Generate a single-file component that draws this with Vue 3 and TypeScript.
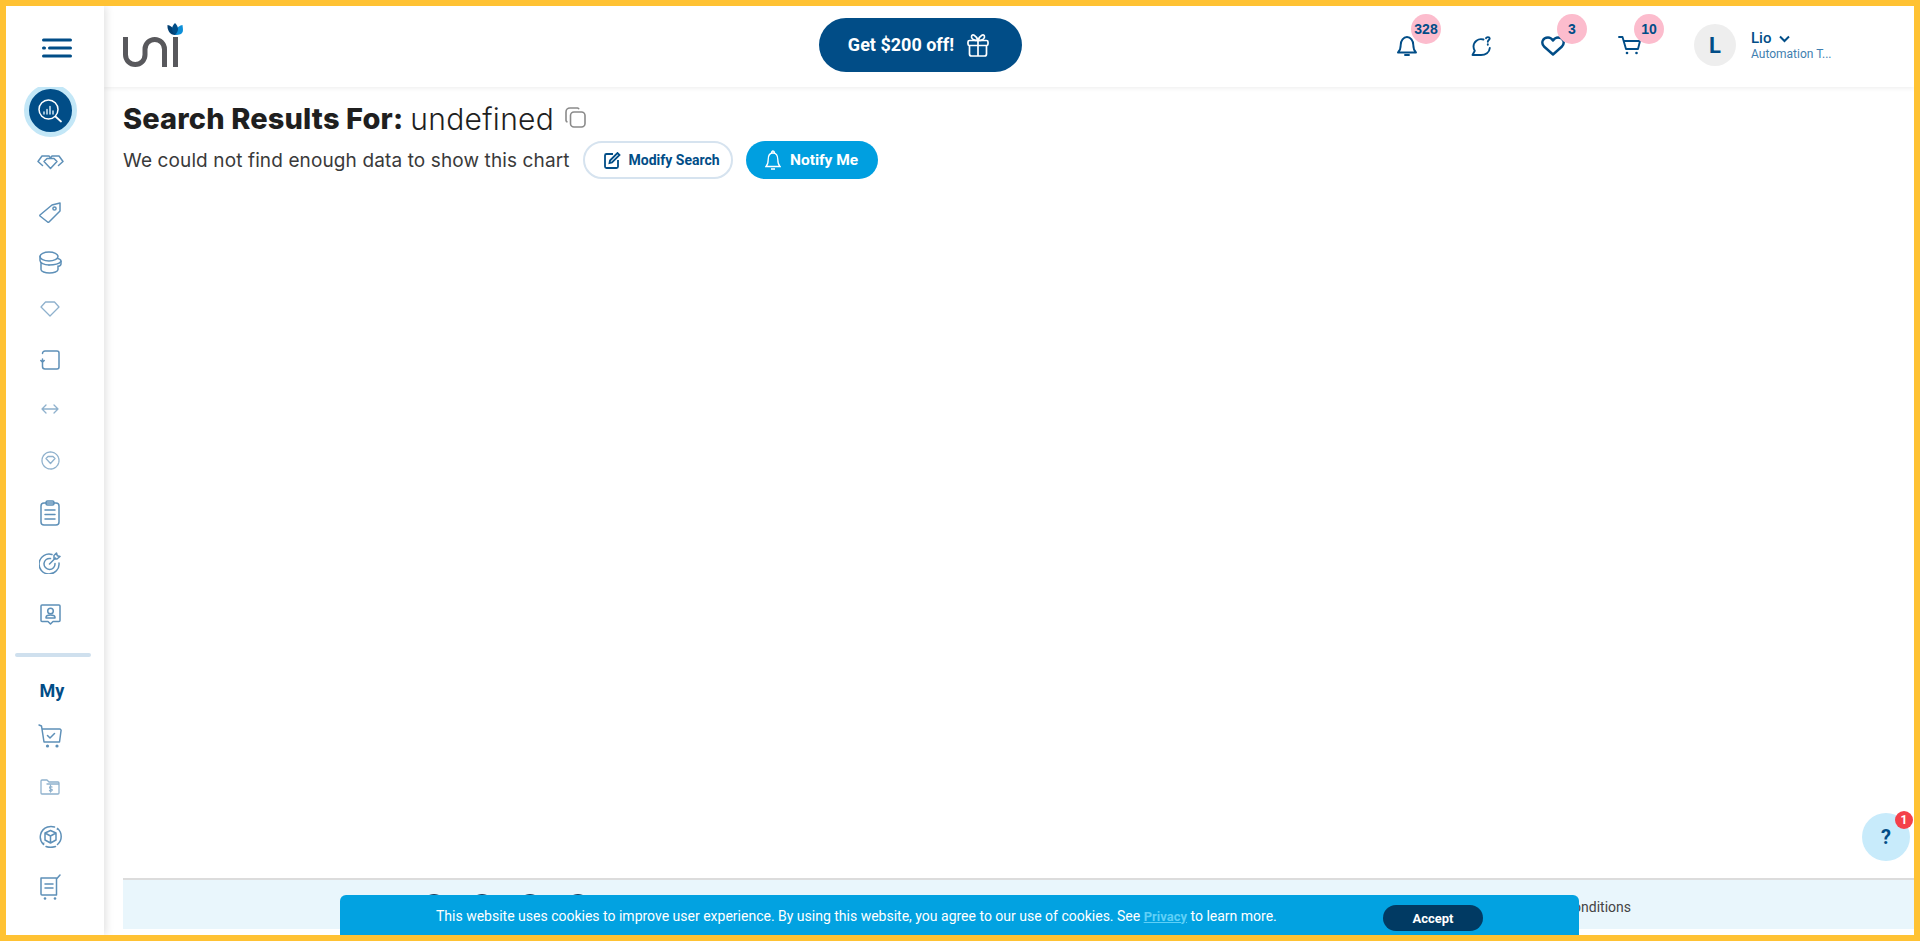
<script setup lang="ts">
const socials: number[] = [1, 2, 3, 4]
const counts = { alerts: 328, likes: 3, cart: 10 }
</script>

<template>
  <div class="frame">
    <aside class="side">
      <button class="burger" aria-label="Menu">
        <svg width="30" height="20" viewBox="0 0 30 20"><path d="M1.500 2h27M1.500 10h1M7.500 10h21M1.500 18h27" stroke="#014d87" stroke-width="3" stroke-linecap="round" fill="none"/></svg>
      </button>
      <div class="active-clip">
        <div class="active">
          <svg width="24" height="24" viewBox="0 0 24 24" fill="none" stroke="#fff"><circle cx="10.500" cy="10.500" r="9.500" stroke-width="1.500"/><path d="M17.500 17.500l5.500 5" stroke-width="1.700" stroke-linecap="round"/><path d="M6 15v-2M9 15v-4.500M12 15V7.500M15 15v-3" stroke="#cfe6f5" stroke-width="1.500" stroke-linecap="round"/></svg>
        </div>
      </div>
      <div class="item i1"><svg width="27" height="15" viewBox="0 0 27 15" class="ic"><path d="M5.500 10.500 1 6.500 5 1h7l1.500 2L15 1h7l4 5.500-4.500 4"/><path d="M7 6.500 10 3.500h7l3 3-6.500 7z"/></svg></div>
      <div class="item i2"><svg width="22" height="21" viewBox="0 0 22 21" class="ic"><path d="M1 13 13 3l8-2v8L10 20a1 1 0 0 1-1.400 0L1 14a.700.700 0 0 1 0-1z"/><circle cx="15.500" cy="6.500" r="1.600"/></svg></div>
      <div class="item i3"><svg width="23" height="23" viewBox="0 0 23 23" class="ic"><ellipse cx="10" cy="5.500" rx="9" ry="4.500"/><path d="M1 5.500v4C1 12 5 14 10 14M19 7.500c1.500.5 3 1.500 3 2.500v3c0 1-1 2-3 2.500M19 15v3.500c0 2-4 3.500-8.500 3.500S2 20.500 2 18.500V12"/><path d="M10 14c4 0 9 0 12-3.500"/></svg></div>
      <div class="item i4"><svg width="20" height="16" viewBox="0 0 20 16" class="ic faint"><path d="M1 6 5.500 1h9L19 6 10 15z"/></svg></div>
      <div class="item i5"><svg width="20" height="20" viewBox="0 0 20 20" class="ic"><path d="M2.500 3.500A2.500 2.500 0 0 1 5 1h12a2 2 0 0 1 2 2v14a2 2 0 0 1-2 2H5a2.500 2.500 0 0 1-2.500-2.500V9M.800 10.500l1.700 1.800 1.700-1.800"/></svg></div>
      <div class="item i6"><svg width="18" height="10" viewBox="0 0 18 10" class="ic faint"><path d="M1 5h16M5 1 1 5l4 4M13 1l4 4-4 4"/></svg></div>
      <div class="item i7"><svg width="19" height="19" viewBox="0 0 19 19" class="ic faint"><circle cx="9.500" cy="9.500" r="8.500" stroke-dasharray="2 .8"/><path d="M5 7.500 7 5.500h5l2 2-4.500 5z"/></svg></div>
      <div class="item i8"><svg width="20" height="26" viewBox="0 0 20 26" class="ic"><rect x="1" y="3" width="18" height="22" rx="3"/><rect x="6" y="1" width="8" height="4" rx="1.500"/><path d="M5 10h10M5 14.500h10M5 19h10"/></svg></div>
      <div class="item i9"><svg width="22" height="22" viewBox="0 0 22 22" class="ic"><path d="M13 2.500A10 10 0 1 0 20 11M11.500 6.500a5.500 5.500 0 1 0 4.500 5"/><path d="M10.500 12l6-6M15 7V3.500L17.500 1l.8 2.700 2.700.8-3 2.500z"/></svg></div>
      <div class="item i10"><svg width="21" height="21" viewBox="0 0 21 21" class="ic"><path d="M2 1h17a1 1 0 0 1 1 1v14.500a1 1 0 0 1-1 1h-6l-2.500 2.500L8 17.500H2a1 1 0 0 1-1-1V2a1 1 0 0 1 1-1z"/><circle cx="10.500" cy="7" r="2.800"/><path d="M6 14v-.5c0-1.500 2-2.500 4.500-2.500s4.500 1 4.500 2.500v.5z"/></svg></div>
      <div class="rule"></div>
      <div class="my">My</div>
      <div class="item m1"><svg width="24" height="24" viewBox="0 0 24 24" class="ic"><path d="M1 1l2.500 1 2.500 16h15.500L23 7a1.500 1.500 0 0 0-1.500-2H4M9.500 11.500l2.500 2.500 4.500-4.500"/><circle cx="9.500" cy="22" r="1.600" class="dot"/><circle cx="19" cy="22" r="1.600" class="dot"/></svg></div>
      <div class="item m2"><svg width="20" height="16" viewBox="0 0 20 16" class="ic faint"><path d="M1 14V2a1 1 0 0 1 1-1h5l2 2h9a1 1 0 0 1 1 1v10a1 1 0 0 1-1 1H2a1 1 0 0 1-1-1zM7 5h12M12 8c-2-1-3 0-2 1.500s3 .5 2 2-2 .5-2.500 0M10.500 6.500v6.500"/></svg></div>
      <div class="item m3"><svg width="23" height="23" viewBox="0 0 23 23" class="ic"><path d="M18.500 3.500a10.500 10.500 0 0 1 0 16M4.500 19.500a10.500 10.500 0 0 1 4-17.500c2-.600 5-.600 7 0M7 21.500c3 1.200 6.500 1 9.500 0M11.500 5.500l5.500 2.500v7l-5.500 3-5.500-3V8zM6 8l5.500 3L17 8M11.500 11v7"/><path d="M18.500 2.500l1.500 2-2.500.5zM3 18l2.500-.5-.5 2.500z" class="dot"/></svg></div>
      <div class="item m4"><svg width="21" height="26" viewBox="0 0 21 26" class="ic"><path d="M1 4h15.500v17H2a1 1 0 0 1-1-1zM16.500 5l3.500-4M5 10h8M5 14h8"/><circle cx="5" cy="24.500" r="1.300" class="dot"/><circle cx="15" cy="24.500" r="1.300" class="dot"/></svg></div>
    </aside>

    <div class="main">
      <header class="top">
        <div class="logo">
          <svg width="65" height="50" viewBox="0 0 65 50" fill="none">
            <path d="M5.500 17v17.750a9.750 9.750 0 0 0 19.500 0V29.250a9.750 9.750 0 0 1 19.500 0V47M55.500 17v30" stroke="#58585c" stroke-width="5"/>
            <path d="M55 15C50 15 47 10 47.500 5 50 5.500 53 7 55 11z" fill="#013f73"/>
            <path d="M55 15C65 15 63 10 62.500 5 60 5.500 57 7 55 11z" fill="#0d8fd8"/>
            <path d="M55 15C51 11 51 7 55 3 59 7 59 11 55 15z" fill="#014d87"/>
          </svg>
        </div>
        <button class="promo">
          <span>Get $200 off!</span>
          <svg width="22" height="24" viewBox="0 0 22 24" fill="none" stroke="#fff" stroke-width="1.700" stroke-linejoin="round"><rect x="1" y="7.500" width="20" height="5" rx="1.500"/><path d="M2.500 12.500V21a2 2 0 0 0 2 2h13a2 2 0 0 0 2-2v-8.500M11 7.500V23M11 7.500C9 2 5 .5 4.500 3.500 4 6 7 7.500 11 7.500zM11 7.500c2-5.500 6-7 6.500-4 .5 2.500-2.500 4-6.500 4z"/></svg>
        </button>
        <div class="tools">
          <div class="tool t1">
            <svg width="20" height="20" viewBox="0 0 20 20" class="tic"><path d="M1 16.500h18c-1.500-1.500-2.700-3-2.700-7.500 0-4.500-2.800-8-6.300-8S3.700 4.500 3.700 9c0 4.500-1.200 6-2.700 7.500zM8 19h4"/></svg>
            <span class="badge b1">{{ counts.alerts }}</span>
          </div>
          <div class="tool t2">
            <svg width="20" height="20" viewBox="0 0 20 20" class="tic"><path d="M12.500 3.500C7 1.800 2.500 6 2.500 10.500c0 1.600.5 3 1.300 4.200L1.500 19H10c4.500 0 8.500-2.500 8.800-7"/><path d="M15 2.200c.6-1.500 3.500-1.500 3.700.2.100 1.500-1.900 1.600-1.900 3.300M16.800 8.200v.6"/></svg>
          </div>
          <div class="tool t3">
            <svg width="24" height="20" viewBox="0 0 24 20" class="tic big"><path d="M12 18.500 3 10.500C-.5 6.500 2 1.500 7 1.500c2.500 0 4 1.500 5 3 1-1.500 2.500-3 5-3 5 0 7.500 5 4 9z"/></svg>
            <span class="badge b3">{{ counts.likes }}</span>
          </div>
          <div class="tool t4">
            <svg width="24" height="19" viewBox="0 0 24 19" class="tic"><path d="M1 1h3.500l3.500 12h12l2-8H6"/><circle cx="9" cy="17" r="1.300" fill="#014d87" stroke="none"/><circle cx="18.500" cy="17" r="1.300" fill="#014d87" stroke="none"/></svg>
            <span class="badge b3">{{ counts.cart }}</span>
          </div>
          <div class="profile">
            <div class="avatar">L</div>
            <div class="who">
              <div class="name">Lio <svg width="11" height="8" viewBox="0 0 11 8" fill="none" stroke="#014d87" stroke-width="2"><path d="M1 1.500l4.500 4.500L10 1.500"/></svg></div>
              <div class="role">Automation T...</div>
            </div>
          </div>
        </div>
      </header>

      <section class="content">
        <h1 class="title"><b>Search Results For:</b><span class="term">undefined</span>
          <svg class="copy" width="21" height="21" viewBox="0 0 21 21" fill="none" stroke="#8a8a8a" stroke-width="1.600"><path d="M14 2.200A2 2 0 0 0 12.500 1H5a4 4 0 0 0-4 4v8.500A2 2 0 0 0 2.500 15"/><rect x="5.500" y="5" width="14.500" height="15" rx="3.500"/></svg>
        </h1>
        <div class="row">
          <span class="msg">We could not find enough data to show this chart</span>
          <button class="btn ghost">
            <svg width="19" height="17" viewBox="0 0 19 17" fill="none" stroke="#014d87" stroke-width="1.800"><path d="M10 2H3.500A1.500 1.500 0 0 0 2 3.500v11A1.500 1.500 0 0 0 3.500 16h10a1.500 1.500 0 0 0 1.500-1.500V8"/><path d="M7 8.500 14.500 1l2 2L9 10.500l-2.500.5z"/></svg>
            Modify Search
          </button>
          <button class="btn solid">
            <svg width="16" height="20" viewBox="0 0 16 20" fill="none" stroke="#fff" stroke-width="1.300"><path d="M1 16.500h14c-1.500-1.500-2.200-3-2.200-7 0-4-1.800-6.500-4.800-6.500S3.200 5.500 3.200 9.500c0 4-.7 5.500-2.200 7zM6 19h4M6.500 3c0-1 .5-2 1.500-2s1.500 1 1.500 2"/></svg>
            Notify Me
          </button>
        </div>
      </section>

      <footer class="foot">
        <div class="socials"><span v-for="s in socials" :key="s" class="soc"></span></div>
        <span class="terms">Terms &amp; Conditions</span>
      </footer>
    </div>

    <div class="help">?<span class="help-badge">1</span></div>

    <div class="cookie">
      <span class="cookie-text">This website uses cookies to improve user experience. By using this website, you agree to our use of cookies. See <a class="privacy">Privacy</a> to learn more.</span>
      <button class="accept">Accept</button>
    </div>
  </div>
</template>

<style>
html, body { margin: 0; height: 100%; background: #fff; overflow: hidden; }
</style>

<style scoped>
.frame {
  box-sizing: border-box;
  width: 1920px;
  height: 941px;
  border: 6px solid #ffc233;
  display: flex;
  position: relative;
  overflow: hidden;
  background: #fff;
  font-family: Roboto, "Liberation Sans", sans-serif;
}
.side {
  width: 98px;
  flex: none;
  display: flex;
  flex-direction: column;
  align-items: center;
  box-shadow: 2px 0 8px rgba(0, 0, 0, .12);
  z-index: 2;
  background: #fff;
}
.burger { border: 0; background: none; padding: 0; margin: 32px 0 0 4px; height: 20px; line-height: 0; flex: none; }
.active-clip {
  margin: 29px 10px 0 0;
  width: 54px;
  height: 50px;
  overflow: hidden;
  display: flex;
  align-items: flex-end;
  justify-content: center;
  flex: none;
}
.active {
  width: 43px;
  height: 43px;
  border-radius: 50%;
  background: #014d87;
  border: 5px solid #c3e7f7;
  display: flex;
  align-items: center;
  justify-content: center;
  flex: none;
}
.item { height: 50px; display: flex; align-items: center; justify-content: center; flex: none; margin-right: 10px; }
.i2 { margin-top: 0; }
.i4 { margin-top: -3px; }
.i5 { margin-top: 1px; }
.i6 { margin-top: -1px; }
.i7 { margin-top: 1px; }
.i8 { margin-top: 3px; }
.i10 { margin-top: 1px; }
.m2 { margin-top: 1px; }
.m3 { margin-top: -1px; }
.m4 { margin-top: 1px; }
.ic { fill: none; stroke: #5e90b8; stroke-width: 1.500; stroke-linecap: round; stroke-linejoin: round; }
.ic.faint { stroke: #8fb1cd; stroke-width: 1.300; }
.ic .dot { fill: #5e90b8; stroke: none; }
.rule { width: 76px; height: 4px; border-radius: 2px; background: #cfe0ee; margin: 14px 4px 0 0; flex: none; }
.my { color: #014d87; font-weight: 700; font-size: 18px; line-height: 22px; margin: 23px 6px 9px 0; }

.main { flex: 1; display: flex; flex-direction: column; min-width: 0; }
.top {
  height: 81px;
  flex: none;
  box-sizing: border-box;
  display: flex;
  align-items: center;
  box-shadow: 0 1px 5px rgba(0, 0, 0, .08);
  padding-left: 16px;
}
.logo { width: 65px; height: 50px; margin-top: -3px; line-height: 0; flex: none; }
.promo {
  width: 203px;
  height: 54px;
  margin: -4px 0 0 634px;
  padding: 0 4px 0 0;
  flex: none;
  border: 0;
  border-radius: 27px;
  background: #014d87;
  color: #fff;
  font: 700 18px Roboto, sans-serif;
  display: flex;
  align-items: center;
  justify-content: center;
  gap: 13px;
}
.tools { display: flex; align-items: center; height: 100%; margin-left: 375px; }
.tool { position: relative; width: 20px; height: 20px; flex: none; margin-top: -1px; line-height: 0; }
.t2 { margin-left: 54px; }
.t3 { margin-left: 50px; width: 24px; }
.t4 { margin-left: 53px; width: 24px; }
.tic { fill: none; stroke: #014d87; stroke-width: 1.900; stroke-linecap: round; stroke-linejoin: round; }
.tic.big { stroke-width: 2.400; }
.badge {
  position: absolute;
  left: 14px;
  top: -22px;
  width: 30px;
  height: 30px;
  border-radius: 50%;
  background: #fcbccd;
  color: #014d87;
  font: 700 14px/30px "Liberation Sans", sans-serif;
  text-align: center;
}
.b3 { left: 16px; }
.profile { display: flex; align-items: center; margin: -3px 0 0 52px; gap: 15px; flex: none; }
.avatar {
  width: 42px; height: 42px; border-radius: 50%; background: #eeeeee; color: #014d87;
  font-weight: 700; font-size: 22px; display: flex; align-items: center; justify-content: center;
}
.who { white-space: nowrap; margin-top: 1px; }
.name { color: #014d87; font-weight: 500; font-size: 15px; line-height: 17px; }
.name svg { margin-left: 4px; vertical-align: 0; }
.role { color: #3f7fb0; font-size: 12px; line-height: 14px; }

.content { flex: 1; padding: 14px 0 0 19px; }
.title { margin: 0; height: 36px; line-height: 36px; color: #1f1f1f; font-weight: 400; display: flex; align-items: center; font-family: Inter, sans-serif; }
.title b { font-weight: 800; font-size: 29px; letter-spacing: .13px; }
.term { font-size: 30px; font-weight: 300; margin-left: 7px; letter-spacing: .3px; }
.copy { margin: -3px 0 0 11px; }
.row { display: flex; align-items: center; margin-top: 4px; height: 38px; }
.msg { font: 400 19px Inter, sans-serif; letter-spacing: .12px; color: #3a3a3a; margin-right: 13px; }
.btn {
  height: 38px; border-radius: 19px; font: 700 14px Roboto, sans-serif; display: flex; align-items: center; justify-content: center; gap: 7px; box-sizing: border-box; padding: 0; flex: none;
}
.ghost { width: 150px; background: #fff; color: #014d87; border: 2px solid #d6e3ef; padding-left: 7px; }
.solid { width: 132px; background: #009fe0; color: #fff; border: 0; margin-left: 13px; font-size: 15.500px; gap: 9px; }

.foot {
  height: 51px;
  flex: none;
  margin: 0 0 6px 19px;
  background: #e9f6fc;
  border-top: 2px solid #dcdcdc;
  box-sizing: border-box;
  display: flex;
  justify-content: space-between;
  padding: 0 283px 0 300px;
}
.socials { display: flex; gap: 26px; padding-top: 14px; }
.soc { width: 22px; height: 22px; border-radius: 50%; background: #1c3f5e; }
.terms { font-size: 14px; color: #444; line-height: 16px; padding-top: 19px; }

.help {
  position: absolute; left: 1856px; top: 807px; width: 48px; height: 48px; border-radius: 50%;
  background: #c8ebfb; color: #014d87; font: 700 20px/48px Roboto, sans-serif; text-align: center;
}
.help-badge {
  position: absolute; left: 33px; top: -2px; width: 18px; height: 18px; border-radius: 50%;
  background: #f4404a; color: #fff; font: 700 12px/18px Roboto, sans-serif; text-align: center;
}
.cookie {
  position: absolute; left: 334px; top: 889px; width: 1239px; height: 40px; background: #02a2e1;
  border-radius: 6px 6px 0 0; z-index: 3; color: #fff; font-size: 14px;
  display: flex; align-items: center;
}
.cookie-text { margin: 1px 0 0 96px; }
.privacy { color: #5fd0f7; font-weight: 700; font-size: 13px; text-decoration: underline; }
.accept {
  position: absolute; left: 1043px; top: 10px; width: 100px; height: 26px; border: 0; border-radius: 13px;
  background: #013a63; color: #fff; font: 700 13px Roboto, sans-serif;
}
</style>
